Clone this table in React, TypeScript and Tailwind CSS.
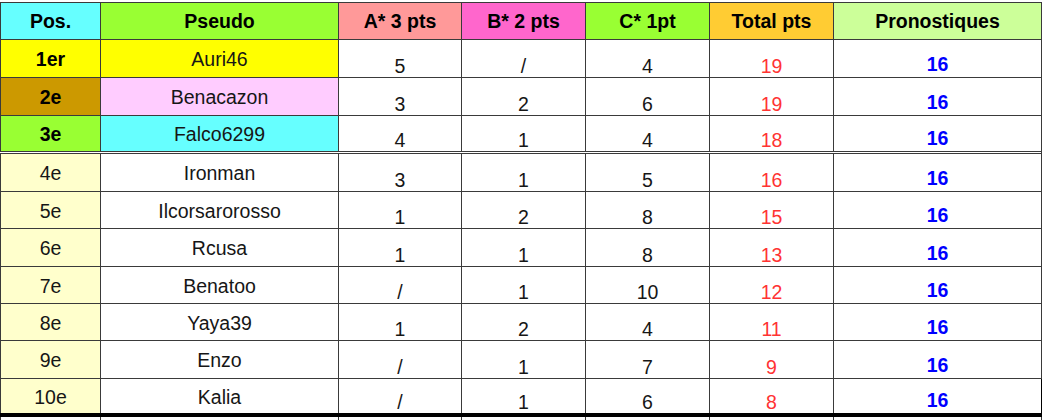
import React from "react";

const grid = "grid grid-cols-[100px_238px_123px_124px_124px_124px_208px] border-r border-[#3a3a3a]";
const cell = "border-l border-[#3a3a3a] flex justify-center";

type Row = { pos: string; name: string; a: string; b: string; c: string; t: string; p: string; posBg: string; nameBg: string; bold?: boolean; h: string; extra?: string };

const rows: Row[] = [
  { pos: "1er", name: "Auri46", a: "5", b: "/", c: "4", t: "19", p: "16", posBg: "bg-[#ffff00]", nameBg: "bg-[#ffff00]", bold: true, h: "h-[38px]", extra: "border-b border-[#3a3a3a]" },
  { pos: "2e", name: "Benacazon", a: "3", b: "2", c: "6", t: "19", p: "16", posBg: "bg-[#cc9900]", nameBg: "bg-[#ffccff]", bold: true, h: "h-[38px]", extra: "border-b border-[#3a3a3a]" },
  { pos: "3e", name: "Falco6299", a: "4", b: "1", c: "4", t: "18", p: "16", posBg: "bg-[#99ff33]", nameBg: "bg-[#66ffff]", bold: true, h: "h-[38px]", extra: "border-b-[3px] border-double border-[#3a3a3a]" },
  { pos: "4e", name: "Ironman", a: "3", b: "1", c: "5", t: "16", p: "16", posBg: "bg-[#ffffcc]", nameBg: "bg-white", h: "h-[38px]", extra: "border-b border-[#3a3a3a]" },
  { pos: "5e", name: "Ilcorsarorosso", a: "1", b: "2", c: "8", t: "15", p: "16", posBg: "bg-[#ffffcc]", nameBg: "bg-white", h: "h-[37px]", extra: "border-b border-[#3a3a3a]" },
  { pos: "6e", name: "Rcusa", a: "1", b: "1", c: "8", t: "13", p: "16", posBg: "bg-[#ffffcc]", nameBg: "bg-white", h: "h-[38px]", extra: "border-b border-[#3a3a3a]" },
  { pos: "7e", name: "Benatoo", a: "/", b: "1", c: "10", t: "12", p: "16", posBg: "bg-[#ffffcc]", nameBg: "bg-white", h: "h-[37px]", extra: "border-b border-[#3a3a3a]" },
  { pos: "8e", name: "Yaya39", a: "1", b: "2", c: "4", t: "11", p: "16", posBg: "bg-[#ffffcc]", nameBg: "bg-white", h: "h-[37px]", extra: "border-b border-[#3a3a3a]" },
  { pos: "9e", name: "Enzo", a: "/", b: "1", c: "7", t: "9", p: "16", posBg: "bg-[#ffffcc]", nameBg: "bg-white", h: "h-[38px]", extra: "border-b border-[#3a3a3a]" },
  { pos: "10e", name: "Kalia", a: "/", b: "1", c: "6", t: "8", p: "16", posBg: "bg-[#ffffcc]", nameBg: "bg-white", h: "h-[38px]", extra: "border-b-4 border-black" },
];

const headers: [string, string][] = [
  ["Pos.", "bg-[#66ffff]"],
  ["Pseudo", "bg-[#99ff33]"],
  ["A* 3 pts", "bg-[#ff9999]"],
  ["B* 2 pts", "bg-[#ff66cc]"],
  ["C* 1pt", "bg-[#99ff33]"],
  ["Total pts", "bg-[#ffcc33]"],
  ["Pronostiques", "bg-[#ccff99]"],
];

export default function App() {
  return (
    <div className="w-[1044px] h-[420px] bg-white overflow-hidden pt-[2px] text-[19.5px] text-[#161616]" style={{ fontFamily: '"Liberation Sans", Arial, sans-serif' }}>
      <div className="w-[1042px]">
        <div className={`${grid} h-[38px] border-t border-b border-[#3a3a3a] font-bold text-black`}>
          {headers.map(([h, bg]) => (
            <div key={h} className={`${cell} ${bg} items-center leading-none pt-[1px]`}>{h}</div>
          ))}
        </div>
        {rows.map((r) => (
          <div key={r.pos} className={`${grid} ${r.h} ${r.extra} leading-none`}>
            <div className={`${cell} ${r.posBg} items-center pt-[3px] ${r.bold ? "font-bold text-black" : ""}`}>{r.pos}</div>
            <div className={`${cell} ${r.nameBg} items-center pt-[3px]`}>{r.name}</div>
            <div className={`${cell} bg-white items-end pb-[1px]`}>{r.a}</div>
            <div className={`${cell} bg-white items-end pb-[1px]`}>{r.b}</div>
            <div className={`${cell} bg-white items-end pb-[1px]`}>{r.c}</div>
            <div className={`${cell} bg-white items-end pb-[1px] text-[#ff3333]`}>{r.t}</div>
            <div className={`${cell} bg-white items-end pb-[3px] font-bold text-[#0000ff]`}>{r.p}</div>
          </div>
        ))}
        <div className={`${grid} h-[4px]`}>
          {headers.map(([h]) => (
            <div key={h} className={`${cell} bg-white`} />
          ))}
        </div>
      </div>
    </div>
  );
}
